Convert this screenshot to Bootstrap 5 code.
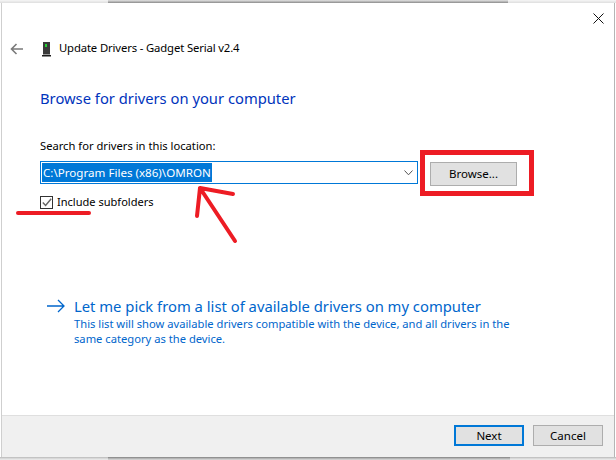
<!DOCTYPE html>
<html lang="en">
<head>
<meta charset="utf-8">
<title>Update Drivers</title>
<link href="https://cdn.jsdelivr.net/npm/bootstrap@5.3.0/dist/css/bootstrap.min.css" rel="stylesheet">
<style>
html,body{margin:0;height:460px;overflow:hidden;background:#fff}
body{font-family:"Noto Sans","Open Sans","Liberation Sans",sans-serif;font-size:11.5px;color:#000;position:relative}
.topstrip{height:3px;background:linear-gradient(#e2e2e2,#c8c8c8 34%,#8a8a8a) no-repeat 108px 0/400px 3px,linear-gradient(#f6f6f6,#dedede)}
.botstrip{height:3px;background:linear-gradient(#7f7f7f,#b4b4b4 50%,#dcdcdc) no-repeat 108px 0/402px 3px,linear-gradient(#b8b8b8,#d8d8d8 50%,#eeeeee)}
.dlg{height:454px;margin:0 1px;background:#fff;border-left:1px solid #cfcfcf;border-right:1px solid #b5b5b5}
.closerow{height:27px;padding:10px 10px 0 0}
.hdr{height:36px;padding-left:8px}
.backicon{width:32px}
.devicon{width:17px}
.ttl{font-size:11.3px;line-height:16px;letter-spacing:-.14px}
.mainpane{padding-left:38px}
.hd{color:#0033bc;font-size:14.75px;line-height:20px;margin-top:22px}
.lbl{margin-top:30px;line-height:16px;font-size:11.2px}
.comborow{margin-top:7px}
.combo{width:378px;height:23px;border:1px solid #0078d7;padding:1px 4px 1px 1px;background:#fff}
.sel{background:#0078d7;color:#fff;padding:0 1px;font-size:11.6px;line-height:19px;height:19px;white-space:nowrap}
.brw{width:87px;height:24px;background:#e1e1e1;border:1px solid #adadad;border-radius:0;padding:0;font-size:11.5px;line-height:20px;color:#000;margin-left:12px;margin-top:1px}
.chkbox{width:13px;height:13px;border:1px solid #333;background:#fff;flex:none}
.chkrow{margin-top:8px;line-height:16px}
.chktxt{margin-left:4px;font-size:11.05px}
.lnkrow{margin-top:86px;margin-left:-17px}
.lnkt{color:#0066cc;font-size:14.8px;line-height:20px;margin-left:9px}
.lnkd{color:#0066cc;font-size:11.2px;line-height:15px;margin-left:34px;width:445px}
.spacer{flex:1}
.foot{height:42px;background:#f0f0f0;border-top:1px solid #dfdfdf;padding:9px 11px 0 0;gap:9px}
.wbtn{width:70px;height:21px;background:#e1e1e1;border:1px solid #adadad;border-radius:0;padding:0;font-size:11.5px;line-height:18px;color:#000}
.wbtn.dflt{border:2px solid #0078d7;line-height:17px}
.ann{position:absolute;left:0;top:0;pointer-events:none}
</style>
</head>
<body>
<div class="topstrip"></div>
<div class="dlg d-flex flex-column">
  <div class="closerow d-flex justify-content-end">
    <svg width="11" height="11" viewBox="0 0 11 11"><path d="M.5.5l10 10M10.500.5l-10 10" stroke="#111" stroke-width="1" fill="none"/></svg>
  </div>
  <div class="hdr d-flex align-items-center">
    <div class="backicon"><svg width="13" height="12" viewBox="0 0 13 12"><path d="M13 6H1.500M6.500 1L1.500 6l5 5" stroke="#7a7a7a" stroke-width="1.600" fill="none"/></svg></div>
    <div class="devicon"><svg width="9" height="15" viewBox="0 0 9 15"><rect x="1" y="0" width="7" height="12.500" fill="#3a3a3a"/><rect x="3" y="2" width="2" height="3" fill="#22d433"/><rect x="0" y="13" width="9" height="1.500" fill="#1a1a1a"/></svg></div>
    <div class="ttl">Update Drivers - Gadget Serial v2.4</div>
  </div>
  <div class="mainpane">
    <div class="hd">Browse for drivers on your computer</div>
    <div class="lbl">Search for drivers in this location:</div>
    <div class="comborow d-flex align-items-start">
      <div class="combo d-flex align-items-center justify-content-between">
        <span class="sel">C:\Program Files (x86)\OMRON</span>
        <svg width="9" height="6" viewBox="0 0 9 6"><path d="M.5.5L4.500 4.800 8.500.5" stroke="#555" fill="none"/></svg>
      </div>
      <button type="button" class="btn brw">Browse...</button>
    </div>
    <div class="chkrow d-flex align-items-center">
      <span class="chkbox d-flex align-items-center justify-content-center"><svg width="10" height="9" viewBox="0 0 10 9"><path d="M.8 4.500L3.600 7.500 9.200.8" stroke="#666" stroke-width="1.400" fill="none"/></svg></span>
      <span class="chktxt">Include subfolders</span>
    </div>
    <div class="lnkrow d-flex align-items-center">
      <svg width="18" height="14" viewBox="0 0 18 14" class="ms-4"><path d="M0 7H17M11 1l6 6-6 6" stroke="#0066cc" stroke-width="1.300" fill="none"/></svg>
      <span class="lnkt">Let me pick from a list of available drivers on my computer</span>
    </div>
    <div class="lnkd">This list will show available drivers compatible with the device, and all drivers in the same category as the device.</div>
  </div>
  <div class="spacer"></div>
  <div class="foot d-flex justify-content-end align-items-start">
    <button type="button" class="btn wbtn dflt">Next</button>
    <button type="button" class="btn wbtn">Cancel</button>
  </div>
</div>
<div class="botstrip"></div>
<svg class="ann" width="616" height="460" viewBox="0 0 616 460" fill="none">
  <rect x="422.500" y="152.500" width="109" height="41" stroke="#ed1c24" stroke-width="5"/>
  <path d="M18 213H89" stroke="#ed1c24" stroke-width="4" stroke-linecap="round"/>
  <path d="M235 241L200 188M197 216L200 188L233 194" stroke="#ed1c24" stroke-width="4" stroke-linecap="round" stroke-linejoin="round"/>
</svg>
</body>
</html>
